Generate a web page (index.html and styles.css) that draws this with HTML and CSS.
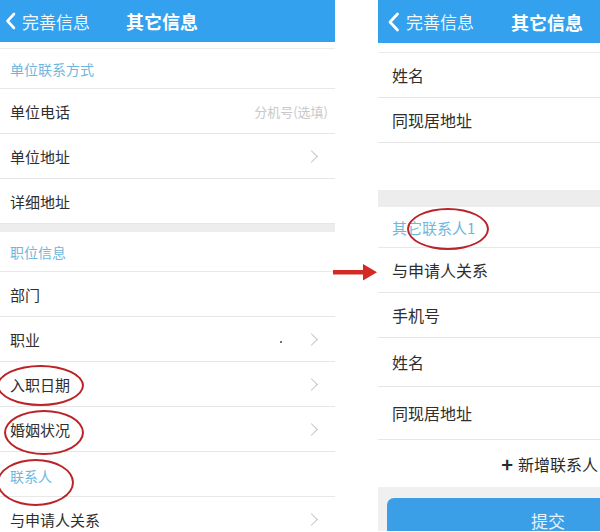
FILE: index.html
```html
<!DOCTYPE html>
<html lang="zh-CN">
<head>
    <meta charset="UTF-8">
    <meta name="viewport" content="width=device-width, initial-scale=1.0">
    <title>其它信息</title>
    <link rel="stylesheet" href="styles.css">
</head>
<body>
    <div class="screen screen-left">
        <div class="topbar">
            <svg class="back-icon" width="11" height="18" viewBox="0 0 11 18"><path d="M9 2 L2.5 9 L9 16" fill="none" stroke="#fff" stroke-width="2.6" stroke-linecap="round" stroke-linejoin="round"/></svg>
            <span class="back-text">完善信息</span>
            <span class="title">其它信息</span>
        </div>
        <div class="top-gap"></div>
        <div class="section">单位联系方式</div>
        <div class="row"><span>单位电话</span><span class="hint">分机号(选填)</span></div>
        <div class="row"><span>单位地址</span><span class="arrow-right"></span></div>
        <div class="row"><span>详细地址</span></div>
        <div class="band"></div>
        <div class="section">职位信息</div>
        <div class="row"><span>部门</span></div>
        <div class="row"><span>职业</span><span class="dot"></span><span class="arrow-right arrow-after-dot"></span></div>
        <div class="row"><span>入职日期</span><span class="arrow-right"></span></div>
        <div class="row"><span>婚姻状况</span><span class="arrow-right"></span></div>
        <div class="section section-tall">联系人</div>
        <div class="row row-cut"><span>与申请人关系</span><span class="arrow-right"></span></div>
    </div>

    <div class="screen screen-right">
        <div class="topbar topbar-right">
            <svg class="back-icon" width="13" height="20" viewBox="0 0 13 20"><path d="M10.5 2 L3 10 L10.5 18" fill="none" stroke="#fff" stroke-width="2.8" stroke-linecap="round" stroke-linejoin="round"/></svg>
            <span class="back-text">完善信息</span>
            <span class="title">其它信息</span>
        </div>
        <div class="top-gap top-gap-right"></div>
        <div class="row"><span>姓名</span></div>
        <div class="row"><span>同现居地址</span></div>
        <div class="blank"></div>
        <div class="band band-tall"></div>
        <div class="section section-right">其它联系人1</div>
        <div class="row"><span>与申请人关系</span></div>
        <div class="row"><span>手机号</span></div>
        <div class="row row-h49"><span>姓名</span></div>
        <div class="row row-h53"><span>同现居地址</span></div>
        <div class="add-contact"><span class="plus">+</span> 新增联系人</div>
        <div class="footer">
            <div class="submit">提交</div>
        </div>
    </div>

    <!-- red annotations drawn over the screenshots -->
    <div class="mark mark-date"></div>
    <div class="mark mark-marriage"></div>
    <div class="mark mark-contact"></div>
    <div class="mark mark-other"></div>
    <svg class="red-arrow" width="46" height="20" viewBox="0 0 46 20">
        <rect x="0" y="8" width="33" height="4.5" fill="#d42a25"/>
        <path d="M30 2 L44 10.2 L30 18.5 Z" fill="#d42a25"/>
    </svg>
</body>
</html>
```

FILE: styles.css
```css
body {
    margin: 0;
    width: 600px;
    height: 532px;
    overflow: hidden;
    position: relative;
    display: flex;
    gap: 43px;
    background: #fff;
    font-family: "Noto Sans CJK SC", "Noto Sans", sans-serif;
    color: #2e2e2e;
}
.screen { background: #fff; }
.screen-left { width: 335px; flex-shrink: 0; }
.screen-right { flex: 1; font-size: 16px; }

.topbar {
    height: 42px;
    background: #33a1ee;
    color: #fff;
    display: flex;
    align-items: center;
    padding-left: 5px;
}
.topbar-right { height: 43px; padding-left: 9px; }
.back-icon { margin-right: 6px; }
.back-text { font-size: 17px; opacity: 0.92; }
.title { font-size: 18px; font-weight: bold; margin-left: 36px; }
.topbar-right .title { margin-left: 37px; }

.top-gap { height: 6px; border-bottom: 1px solid #ececec; }
.top-gap-right { height: 9px; }

.section {
    height: 39px;
    border-bottom: 1px solid #e8e8e8;
    display: flex;
    align-items: center;
    padding-left: 10px;
    font-size: 14px;
    color: #6fb7dd;
}
.section-tall { height: 45px; padding-top: 4px; box-sizing: border-box; }
.section-right { height: 40px; padding-left: 14px; font-size: 15px; }

.row {
    height: 44px;
    border-bottom: 1px solid #e6e6e6;
    display: flex;
    align-items: center;
    padding: 0 15px 0 10px;
    font-size: 15px;
}
.row-cut { height: 35px; box-sizing: border-box; border-bottom: none; padding-top: 9px; }
.screen-right .row { padding-left: 14px; font-size: 16px; }
.row-h49 { height: 48px; }
.row-h53 { height: 52px; }

.hint { margin-left: auto; margin-right: -8px; font-size: 13px; color: #c9c9c9; }
.arrow-right {
    margin-left: auto;
    margin-right: 4px;
    width: 8px;
    height: 8px;
    border-top: 1.5px solid #c4c4c4;
    border-right: 1.5px solid #c4c4c4;
    transform: rotate(45deg);
}
.dot {
    margin-left: auto;
    width: 2px;
    height: 2px;
    background: #444;
    border-radius: 50%;
    position: relative;
    top: 3px;
}
.arrow-after-dot { margin-left: 25px; }

.band { height: 8px; background: #ededed; }
.band-tall { height: 17px; }
.blank { height: 47px; }

.add-contact {
    height: 47px;
    display: flex;
    align-items: center;
    justify-content: flex-end;
    padding-right: 2px;
    font-size: 16px;
    color: #2a2a2a;
}
.plus { font-weight: bold; font-size: 20px; margin-right: 5px; }

.footer {
    background: #f0f0f0;
    padding: 11px 0 0 9px;
}
.submit {
    height: 33px;
    border-radius: 7px 0 0 0;
    background: #3a9fe6;
    color: #e4f2fc;
    font-size: 17px;
    line-height: 24px;
    padding: 11px 0 0 144px;
    box-sizing: border-box;
}

.mark {
    position: absolute;
    border: 2.5px solid #ba2429;
    border-radius: 50%;
    box-sizing: border-box;
}
.mark-date { left: -3px; top: 365px; width: 87px; height: 41px; }
.mark-marriage { left: 4px; top: 410px; width: 80px; height: 45px; }
.mark-contact { left: -3px; top: 459px; width: 77px; height: 47px; }
.mark-other { left: 407px; top: 208px; width: 82px; height: 42px; }
.red-arrow { position: absolute; left: 333px; top: 262px; }
```
